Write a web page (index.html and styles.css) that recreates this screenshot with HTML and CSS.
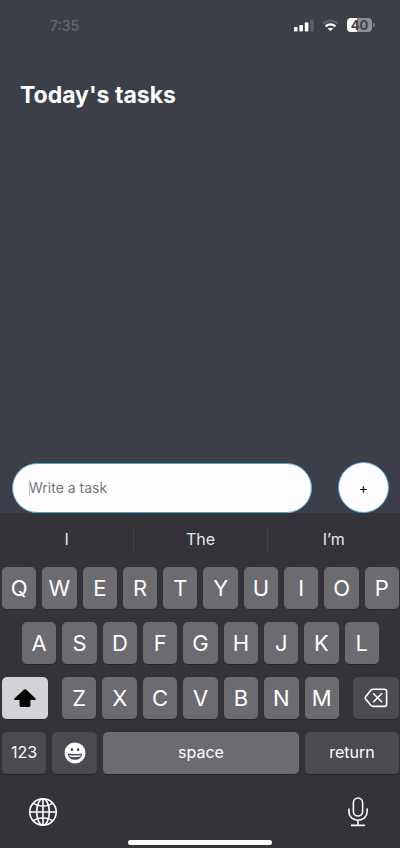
FILE: index.html
```html
<!DOCTYPE html>
<html lang="en">
<head>
<meta charset="utf-8">
<meta name="viewport" content="width=device-width, initial-scale=1">
<title>Today's tasks</title>
<link rel="stylesheet" href="styles.css">
</head>
<body>
<header class="status">
  <time class="clock">7:35</time>
  <div class="indicators">
    <svg width="20" height="13" viewBox="0 0 20 13" aria-hidden="true">
      <g fill="#fff"><rect x="0" y="8" width="3.6" height="4.5" rx="1"/><rect x="5.4" y="6" width="3.6" height="6.5" rx="1"/><rect x="10.8" y="3.2" width="3.6" height="9.3" rx="1"/></g>
      <rect x="16.2" y="0.5" width="3.6" height="12" rx="1" fill="#5b5e65"/>
    </svg>
    <svg width="17" height="13" viewBox="0 0 18 13" fill="none" aria-hidden="true">
      <path d="M1.2 4.6C5.6.4 12.4.4 16.8 4.6" stroke="#5f6269" stroke-width="2.3"/>
      <path d="M3.9 7.4C6.8 4.7 11.2 4.7 14.1 7.4" stroke="#fff" stroke-width="2.3"/>
      <path d="M9 12.6 6.1 9.8C7.7 8.4 10.3 8.4 11.9 9.8Z" fill="#fff"/>
    </svg>
    <div class="battery"><span class="level">40</span></div>
  </div>
</header>
<main class="tasks">
  <h1 class="title">Today's tasks</h1>
  <form class="composer">
    <div class="field">
      <input class="entry" type="text" placeholder="Write a task" aria-label="Write a task">
      <span class="caret"></span>
    </div>
    <button class="add" type="button" aria-label="Add task">+</button>
  </form>
</main>
<section class="keyboard" aria-label="Keyboard">
  <div class="suggestions">
    <button class="suggestion" type="button">I</button>
    <button class="suggestion" type="button">The</button>
    <button class="suggestion" type="button">I’m</button>
  </div>
  <div class="rows">
    <div class="row">
      <button class="key" type="button">Q</button><button class="key" type="button">W</button><button class="key" type="button">E</button><button class="key" type="button">R</button><button class="key" type="button">T</button><button class="key" type="button">Y</button><button class="key" type="button">U</button><button class="key" type="button">I</button><button class="key" type="button">O</button><button class="key" type="button">P</button>
    </div>
    <div class="row row-home">
      <button class="key" type="button">A</button><button class="key" type="button">S</button><button class="key" type="button">D</button><button class="key" type="button">F</button><button class="key" type="button">G</button><button class="key" type="button">H</button><button class="key" type="button">J</button><button class="key" type="button">K</button><button class="key" type="button">L</button>
    </div>
    <div class="row-shift">
      <button class="key key-light" type="button" aria-label="Shift">
        <svg width="24" height="20" viewBox="0 0 24 20" aria-hidden="true"><path d="M11 1.6Q12 .7 13 1.6L22.6 10.4Q23.6 12 22 12H17.4V17.5Q17.4 19 16 19H8Q6.6 19 6.6 17.5V12H2Q.4 12 1.4 10.4Z" fill="#000"/></svg>
      </button>
      <div class="row">
        <button class="key" type="button">Z</button><button class="key" type="button">X</button><button class="key" type="button">C</button><button class="key" type="button">V</button><button class="key" type="button">B</button><button class="key" type="button">N</button><button class="key" type="button">M</button>
      </div>
      <button class="key key-dark" type="button" aria-label="Delete">
        <svg width="24" height="20" viewBox="0 0 24 20" fill="none" stroke="#fff" stroke-width="1.6" stroke-linejoin="round" stroke-linecap="round" aria-hidden="true"><path d="M9.2 1.2H20.4Q22.6 1.2 22.6 3.4V16.2Q22.6 18.4 20.4 18.4H9.2Q8 18.4 7 17.5L1.8 11.2Q.8 9.8 1.8 8.4L7 2.1Q8 1.2 9.2 1.2Z"/><path d="M9.6 5.8l8 8M17.6 5.8l-8 8"/></svg>
      </button>
    </div>
    <div class="row-space">
      <button class="key key-dark key-word" type="button">123</button>
      <button class="key key-dark" type="button" aria-label="Emoji">
        <svg width="22" height="22" viewBox="0 0 22 22" aria-hidden="true"><circle cx="11" cy="11" r="10.5" fill="#fff"/><g fill="#4a4a4f"><ellipse cx="7.9" cy="7.6" rx="1.2" ry="1.7"/><ellipse cx="14.1" cy="7.6" rx="1.2" ry="1.7"/><path d="M3.8 11.4Q11 12.6 18.2 11.4Q17.6 17.8 11 17.8T3.8 11.4Z"/></g><path d="M5.2 12.9Q11 13.9 16.8 12.9L16.1 14.4Q11 15.4 5.9 14.4Z" fill="#fff"/></svg>
      </button>
      <button class="key key-word" type="button">space</button>
      <button class="key key-dark key-word" type="button">return</button>
    </div>
  </div>
  <div class="tools">
    <button class="tool" type="button" aria-label="Next keyboard">
      <svg width="30" height="30" viewBox="0 0 30 30" fill="none" stroke="#fff" stroke-width="1.6" aria-hidden="true"><circle cx="15" cy="15" r="13.2"/><ellipse cx="15" cy="15" rx="6.3" ry="13.2"/><path d="M15 1.8V28.2M1.8 15H28.2M5.2 6.4Q15 12 24.8 6.4M5.2 23.6Q15 18 24.8 23.6"/></svg>
    </button>
    <button class="tool" type="button" aria-label="Dictate">
      <svg width="22" height="30" viewBox="0 0 22 30" fill="none" stroke="#fff" stroke-width="1.6" stroke-linecap="round" aria-hidden="true"><rect x="6.4" y="1" width="9.2" height="18" rx="4.6"/><path d="M1.9 12V14.6C1.9 20 5.8 23.2 11 23.2S20.1 20 20.1 14.6V12M11 23.2V28.4M4.6 28.4H17.4"/></svg>
    </button>
  </div>
  <div class="home-bar"></div>
</section>
</body>
</html>
```

FILE: styles.css
```css
* {
  box-sizing: border-box;
}

body {
  margin: 0;
  min-height: 100vh;
  display: flex;
  flex-direction: column;
  background: #3c3f48;
  color: #fff;
  font-family: Inter, "Liberation Sans", sans-serif;
}

button {
  margin: 0;
  padding: 0;
  border: 0;
  background: none;
  color: inherit;
  font: inherit;
}

svg {
  display: block;
}

.status {
  display: flex;
  justify-content: space-between;
  align-items: center;
  height: 50px;
  padding: 0 28px 0 50px;
}

.clock {
  color: #66676c;
  font-size: 14px;
  font-weight: 500;
}

.indicators {
  display: flex;
  align-items: center;
  gap: 8px;
}

.battery {
  position: relative;
  width: 25px;
  height: 14px;
  border-radius: 4px;
  background: linear-gradient(90deg, #fff 40%, #8d8f95 40%);
  color: #3c3f48;
  text-align: center;
}

.battery::after {
  content: "";
  position: absolute;
  top: 5px;
  right: -3px;
  width: 2px;
  height: 4px;
  border-radius: 0 2px 2px 0;
  background: #777a80;
}

.level {
  display: block;
  font-size: 13px;
  font-weight: 700;
  line-height: 14px;
}

.tasks {
  flex: 1;
  display: flex;
  flex-direction: column;
  justify-content: space-between;
}

.title {
  margin: 0;
  padding: 30px 20px;
  font-size: 23px;
  font-weight: 700;
  line-height: 30px;
}

.composer {
  display: flex;
  align-items: center;
  gap: 26px;
  padding: 0 11px 0 12px;
}

.field {
  position: relative;
  flex: 1;
}

.entry {
  display: block;
  width: 100%;
  height: 50px;
  padding: 0 16px;
  border: 1px solid #4aa8e0;
  border-radius: 25px;
  outline: 0;
  background: #fffdff;
  color: #222;
  font: 14px Inter, "Liberation Sans", sans-serif;
}

.entry::placeholder {
  color: #77777b;
  opacity: 1;
}

.caret {
  position: absolute;
  top: 17px;
  left: 17px;
  width: 1px;
  height: 16px;
  background: #b4c4d6;
}

.add {
  width: 51px;
  height: 51px;
  border: 1px solid #4aa8e0;
  border-radius: 50%;
  background: #fffdff;
  color: #000;
  font-size: 14px;
}

.keyboard {
  display: flex;
  flex-direction: column;
  background: #343339;
}

.suggestions {
  display: grid;
  grid-template-columns: repeat(3, 1fr);
  padding: 13px 0 16px;
}

.suggestion {
  height: 25px;
  color: #e8e8ea;
  font-size: 16px;
}

.suggestion + .suggestion {
  border-left: 1px solid #424247;
}

.rows {
  display: grid;
  gap: 12px;
  padding: 0 1px 0 2px;
}

.row {
  display: grid;
  grid-auto-flow: column;
  grid-auto-columns: minmax(0, 1fr);
  gap: 6px;
}

.row-home {
  padding: 0 20px;
}

.row-shift {
  display: grid;
  grid-template-columns: 46px 1fr 46px;
  gap: 14px;
}

.row-space {
  display: grid;
  grid-template-columns: 44px 45px 1fr 94px;
  gap: 6px;
}

.key {
  display: flex;
  align-items: center;
  justify-content: center;
  height: 43px;
  border-bottom: 1px solid #232327;
  border-radius: 5px;
  background: #6b6b70;
  font-size: 22px;
}

.key-dark {
  background: #4a4a4f;
}

.key-light {
  background: #d3d3d7;
}

.key-word {
  padding-bottom: 2px;
  font-size: 16px;
}

.tools {
  display: flex;
  justify-content: space-between;
  padding: 22px 31px 0 28px;
}

.home-bar {
  width: 36%;
  height: 5px;
  margin: 13px auto 3px;
  border-radius: 3px;
  background: #fff;
}
```
